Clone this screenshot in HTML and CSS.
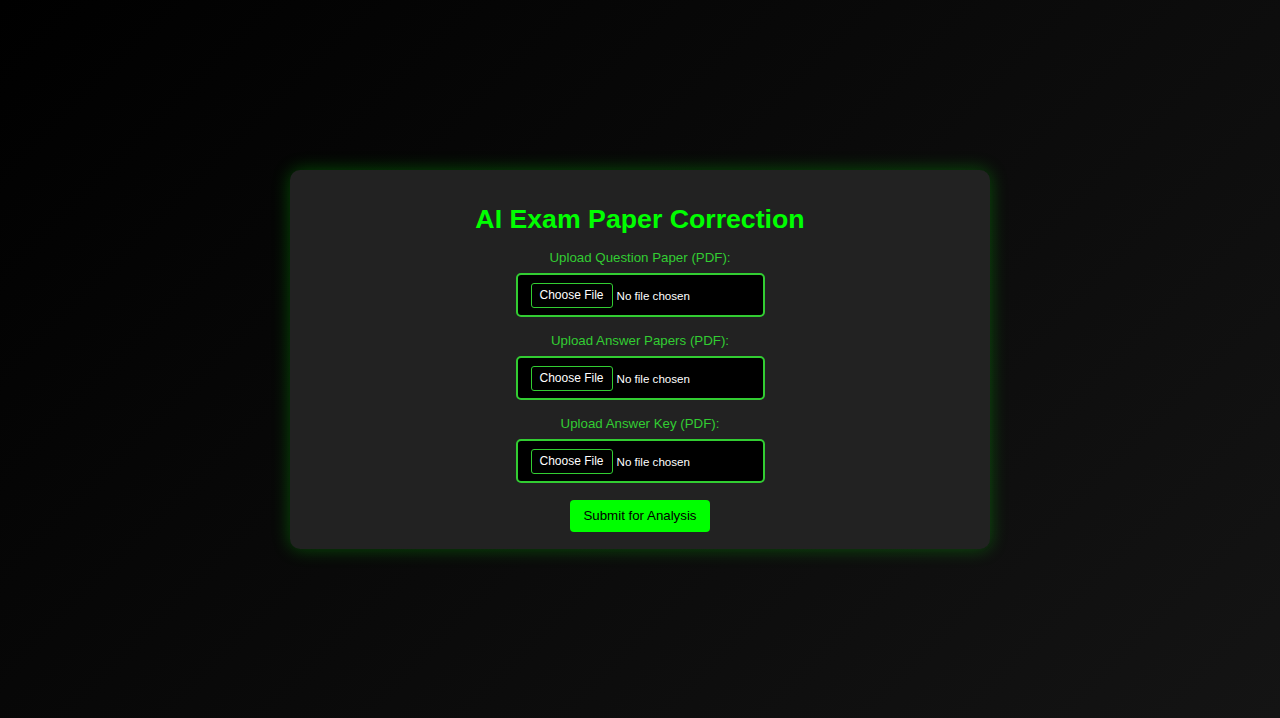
FILE: index.html
```html
<!DOCTYPE html>
<html lang="en">
<head>
<meta charset="utf-8">
<title>AI Exam Paper Correction</title>
<link rel="stylesheet" href="styles.css">
</head>
<body>
<div class="container">
  <h1 class="title">AI Exam Paper Correction</h1>
  <form class="form">
    <label class="label" for="q">Upload Question Paper (PDF):</label>
    <input class="file" id="q" type="file" accept="application/pdf">
    <label class="label" for="a">Upload Answer Papers (PDF):</label>
    <input class="file" id="a" type="file" accept="application/pdf">
    <label class="label" for="k">Upload Answer Key (PDF):</label>
    <input class="file" id="k" type="file" accept="application/pdf">
    <button class="submit" type="button">Submit for Analysis</button>
  </form>
</div>
</body>
</html>
```

FILE: styles.css
```css
html, body {
  margin: 0;
  height: 100%;
}
body {
  font-family: "Liberation Sans", Arial, sans-serif;
  background: linear-gradient(135deg, #000000 0%, #141414 100%);
  display: flex;
  align-items: center;
  justify-content: center;
  color: #ffffff;
}
.container {
  box-sizing: border-box;
  width: 700px;
  background: #222222;
  border-radius: 10px;
  padding: 33px 20px 17px;
  box-shadow: 0 0 18px rgba(0, 255, 0, 0.28);
  text-align: center;
}
.title {
  margin: 0 0 15px;
  font-size: 26.7px;
  line-height: 32px;
  font-weight: bold;
  color: #00ff00;
}
.form {
  display: flex;
  flex-direction: column;
  align-items: center;
}
.label {
  display: block;
  font-size: 13.3px;
  line-height: 16px;
  color: #32cd32;
  margin-bottom: 7px;
}
.file {
  box-sizing: border-box;
  width: 249px;
  height: 44px;
  margin: 0 0 16px;
  padding: 8px 10px 7px 13px;
  background: #000000;
  border: 2px solid #32cd32;
  border-radius: 5px;
  color: #ffffff;
  font-family: "Liberation Sans", Arial, sans-serif;
  font-size: 11.6px;
  text-align: left;
}
.file::file-selector-button {
  box-sizing: border-box;
  height: 25px;
  padding: 0 8px;
  margin: 0 4px 0 0;
  background: #000000;
  color: #ffffff;
  border: 1px solid #32cd32;
  border-radius: 3px;
  font-family: "Liberation Sans", Arial, sans-serif;
  font-size: 12px;
}
.form .file:last-of-type {
  margin-bottom: 17px;
}
.submit {
  box-sizing: border-box;
  height: 32px;
  padding: 0 13px;
  background: #00ff00;
  color: #000000;
  border: none;
  border-radius: 4px;
  font-family: "Liberation Sans", Arial, sans-serif;
  font-size: 13.3px;
}
```
